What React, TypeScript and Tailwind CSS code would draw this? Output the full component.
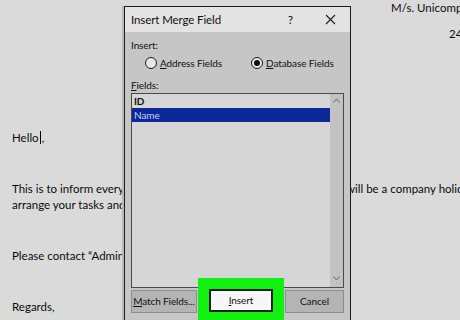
import { useState } from 'react'

const docFont = { fontFamily: 'Lato, "Liberation Sans", sans-serif' }
const uiFont = { fontFamily: 'Lato, "Liberation Sans", sans-serif' }

function Radio({ checked, label, hot }: { checked: boolean; label: string; hot: string }) {
  const rest = label.slice(1)
  return (
    <label className="flex h-[14px] items-center gap-[3px] whitespace-nowrap">
      <span className="flex h-[12px] w-[12px] items-center justify-center rounded-full border-[1.5px] border-[#1a1a1a] bg-[#e8e8e8]">
        {checked && <span className="h-[6px] w-[6px] rounded-full bg-[#111]" />}
      </span>
      <span>
        <span className="underline">{hot}</span>
        {rest}
      </span>
    </label>
  )
}

function MergeDialog() {
  const [selected, setSelected] = useState('Name')
  const fields = ['ID', 'Name']

  return (
    <div
      className="absolute left-[124px] top-[6px] flex h-[320px] w-[227px] flex-col border border-[#1c1c1c] bg-[#c6c6c6] text-[10px] leading-[13px] tracking-[-0.1px] text-[#111] shadow-[-2px_0_0_#b9b9b9]"
      style={uiFont}
    >
      <div className="flex h-[25px] items-center bg-[#e3e3e3] pl-[6px] pr-[14px] text-[11.5px]">
        <span className="flex-1 whitespace-nowrap">Insert Merge Field</span>
        <span className="mr-[32px] text-[12px]">?</span>
        <svg width="11" height="11" viewBox="0 0 11 11" className="text-[#222]">
          <path d="M1 1 L10 10 M10 1 L1 10" stroke="currentColor" strokeWidth="1.2" />
        </svg>
      </div>

      <div className="flex flex-1 flex-col px-[6px] pt-[7px]">
        <div>Insert:</div>
        <div className="mt-[4px] flex pl-[14px]">
          <div className="w-[106px]">
            <Radio checked={false} hot="A" label="Address Fields" />
          </div>
          <Radio checked hot="D" label="Database Fields" />
        </div>

        <div className="mt-[9px]">
          <span className="underline">F</span>ields:
        </div>

        <div className="mt-[1px] flex h-[195px] border border-[#4a4a4a] bg-[#d6d6d6]">
          <div className="flex-1 pt-[1px]">
            {fields.map((f) => (
              <div
                key={f}
                onClick={() => setSelected(f)}
                className={
                  f === selected
                    ? 'h-[14px] bg-[#0c2796] pl-[2px] leading-[14px] text-[#bcd6ff]'
                    : 'h-[13px] pl-[2px] leading-[13px] font-bold'
                }
              >
                {f}
              </div>
            ))}
          </div>
          <div className="flex w-[13px] flex-col items-center justify-between bg-[#c2c2c2] pb-[6px] pt-[4px] text-[#666]">
            <svg width="7" height="5" viewBox="0 0 7 5">
              <path d="M0.5 4.5 L3.5 1 L6.5 4.5" fill="none" stroke="currentColor" strokeWidth="1" />
            </svg>
            <svg width="7" height="5" viewBox="0 0 7 5">
              <path d="M0.5 0.5 L3.5 4 L6.5 0.5" fill="none" stroke="currentColor" strokeWidth="1" />
            </svg>
          </div>
        </div>

        <div className="mt-[2px] flex items-start">
          <button className="h-[23px] w-[66px] whitespace-nowrap border border-[#8d8d8d] bg-[#b4b4b4] text-[10px]">
            <span className="underline">M</span>atch Fields...
          </button>
          <div className="-mt-[12px] ml-[1px] border-[11px] border-b-[8px] border-[#12f012] bg-[#12f012]">
            <button className="h-[23px] w-[64px] border-2 border-[#1e1e1e] bg-[#f7f7f7] text-[10px]">
              <span className="underline">I</span>nsert
            </button>
          </div>
          <button className="ml-[1px] h-[23px] w-[59px] border border-[#8d8d8d] bg-[#b4b4b4] text-[10px]">
            Cancel
          </button>
        </div>
      </div>
    </div>
  )
}

export default function App() {
  return (
    <div className="relative h-[320px] w-[460px] overflow-hidden bg-[#dadada] text-[#0b0b0b]" style={docFont}>
      <div className="flex flex-col text-[11.5px] leading-[16px]">
        <div className="whitespace-nowrap pl-[391px]">M/s. Unicomp</div>
        <div className="mt-[10px] pl-[449px]">24</div>

        <div className="mt-[87px] pl-[12px]">
          Hello<span className="mx-[1px] inline-block h-[13px] w-[1px] translate-y-[2px] bg-black" />,
        </div>

        <div className="mt-[35px] flex whitespace-nowrap pl-[12px]">
          <span className="w-[334px] shrink-0">This is to inform everyone that</span>
          <span className="shrink-0">will be a company holiday</span>
        </div>
        <div className="whitespace-nowrap pl-[12px]">arrange your tasks and</div>

        <div className="mt-[35px] whitespace-nowrap pl-[12px]">Please contact “Administration</div>

        <div className="mt-[35px] pl-[12px]">Regards,</div>
      </div>

      <MergeDialog />
    </div>
  )
}
